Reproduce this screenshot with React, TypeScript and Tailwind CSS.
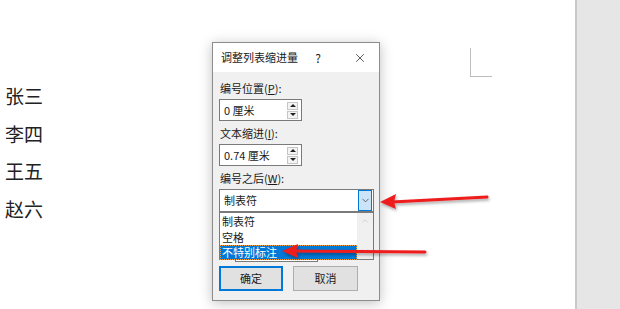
import { ChevronDown, ChevronUp, X } from 'lucide-react';

const names = ['张三', '李四', '王五', '赵六'];
const options = ['制表符', '空格', '不特别标注'];

function Spin() {
	return (
		<div className="flex flex-col gap-px">
			{['up', 'down'].map(dir => (
				<div
					key={dir}
					className="flex h-[8px] w-[11px] items-center justify-center border border-[#c5c5c5] bg-[#f3f3f3]"
				>
					<div
						className={
							dir === 'up'
								? 'h-0 w-0 border-x-[3px] border-b-[3px] border-x-transparent border-b-[#222]'
								: 'h-0 w-0 border-x-[3px] border-t-[3px] border-x-transparent border-t-[#222]'
						}
					/>
				</div>
			))}
		</div>
	);
}

function Field({ value }: { value: string }) {
	return (
		<div className="mt-[3px] flex h-[22px] w-[83px] items-center justify-between border border-[#7a7a7a] bg-white pl-[4px] pr-[3px]">
			<span>{value}</span>
			<Spin />
		</div>
	);
}

function Label({ text, hot }: { text: string; hot: string }) {
	return (
		<div className="h-[16px] pl-px leading-[16px]">
			{text}(<span className="underline">{hot}</span>):
		</div>
	);
}

function Dialog() {
	return (
		<div className="absolute left-[212px] top-[42px] flex w-[168px] flex-col border border-[#8c8c8c] bg-[#f0f0f0] text-[11px] text-[#1a1a1a] shadow-[0_2px_12px_rgba(0,0,0,0.25)]">
			<div className="flex h-[29px] items-center bg-white pl-[8px] pr-[12px]">
				<span className="flex-1">调整列表缩进量</span>
				<span className="mr-[32px] text-[12px]">?</span>
				<X size={14} strokeWidth={1.2} />
			</div>
			<div className="flex flex-col px-[6px] pb-[9px] pt-[8px]">
				<Label text="编号位置" hot="P" />
				<Field value="0 厘米" />
				<div className="mt-[4px]">
					<Label text="文本缩进" hot="I" />
				</div>
				<Field value="0.74 厘米" />
				<div className="mt-[4px]">
					<Label text="编号之后" hot="W" />
				</div>
				<div className="relative mt-[3px] w-[155px]">
					<div className="flex h-[23px] items-center justify-between border border-[#7a7a7a] bg-white pl-[4px] pr-px">
						<span>制表符</span>
						<div className="flex h-[21px] w-[14px] items-center justify-center border border-[#0078d7] bg-[#cce4f7]">
							<ChevronDown size={11} strokeWidth={1.5} className="text-[#333]" />
						</div>
					</div>
					<div className="absolute left-0 top-full z-10 flex h-[48px] w-[155px] border border-[#7a7a7a] bg-white">
						<div className="flex flex-1 flex-col">
							{options.map((o, i) => (
								<div
									key={o}
									className={
										i === 2
											? 'h-[15px] border border-dotted border-[#f0a040] bg-[#0078d7] pl-[1px] leading-[13px] text-white'
											: 'h-[16px] pl-[2px] leading-[16px]'
									}
								>
									{o}
								</div>
							))}
						</div>
						<div className="flex w-[16px] flex-col items-center justify-between bg-[#f0f0f0] py-[3px]">
							<ChevronUp size={10} strokeWidth={1.5} className="text-[#bdbdbd]" />
							<ChevronDown size={10} strokeWidth={1.5} className="text-[#bdbdbd]" />
						</div>
					</div>
				</div>
				<div className="ml-[16px] mt-[28px] h-[22px] w-[83px] border border-[#7a7a7a] bg-white" />
				<div className="mt-[4px] flex gap-[10px]">
					<button className="h-[25px] w-[64px] border-2 border-[#0078d7] bg-[#e1e1e1]">确定</button>
					<button className="h-[25px] w-[65px] border border-[#adadad] bg-[#e1e1e1]">取消</button>
				</div>
			</div>
		</div>
	);
}

function Arrows() {
	return (
		<svg className="pointer-events-none absolute left-0 top-0 z-20" width="620" height="309">
			<defs>
				<filter id="sh" x="-10%" y="-50%" width="120%" height="200%">
					<feDropShadow dx="1" dy="2" stdDeviation="1.5" floodColor="#000" floodOpacity="0.35" />
				</filter>
			</defs>
			<g filter="url(#sh)" fill="#ee1c1c" stroke="#ee1c1c">
				<line x1="487" y1="197" x2="392" y2="202" strokeWidth="3" strokeLinecap="round" />
				<polygon points="380,202 396,194 394,202 396,209" stroke="none" />
				<line x1="425" y1="252" x2="294" y2="251" strokeWidth="3" strokeLinecap="round" />
				<polygon points="282,251 298,244 296,251 298,258" stroke="none" />
			</g>
		</svg>
	);
}

export default function App() {
	return (
		<div className="relative flex h-[309px] w-[620px] overflow-hidden bg-white font-['Noto_Sans_CJK_SC',sans-serif]">
			<div className="relative flex-1">
				<div className="flex flex-col gap-[17.5px] pl-[5px] pt-[86px] text-[19px] leading-[20px] text-[#222]">
					{names.map(n => (
						<div key={n}>{n}</div>
					))}
				</div>
				<div className="absolute left-[470px] top-[48px] h-[29px] w-[22px] border-b border-l border-[#bdbdbd]" />
				<Dialog />
			</div>
			<div className="w-[45px] border-l-2 border-[#c9c9c9] bg-[#e6e6e6]" />
			<Arrows />
		</div>
	);
}
